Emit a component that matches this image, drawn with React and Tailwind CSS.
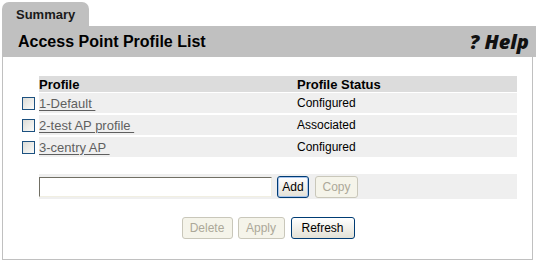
import React from "react";

const rows = [
  { name: "1-Default ", status: "Configured" },
  { name: "2-test AP profile ", status: "Associated" },
  { name: "3-centry AP ", status: "Configured" },
];

function Btn({ children, disabled, focused, className = "" }) {
  if (disabled) {
    return (
      <button
        disabled
        className={`h-[22px] rounded-[3px] border border-[#c9c7ba] bg-[#f5f4ea] text-[12px] text-[#aca899] leading-none ${className}`}
      >
        {children}
      </button>
    );
  }
  return (
    <button
      className={`h-[22px] rounded-[3px] border border-[#003c74] bg-gradient-to-b from-[#ffffff] to-[#e3e1d6] text-[12px] text-black leading-none ${
        focused ? "shadow-[inset_0_0_0_1px_#a8c4ec]" : ""
      } ${className}`}
    >
      {children}
    </button>
  );
}

export default function App() {
  return (
    <div className="w-[536px] h-[263px] bg-white font-['Liberation_Sans',Arial,sans-serif] text-black overflow-hidden">
      <div className="pt-[2px] pl-[2px]">
        <div className="w-[87px] h-[24px] bg-[#c0c0c0] rounded-t-[7px] pl-[14px] pt-[6px] text-[13px] font-bold leading-none text-[#1a1a1a]">
          Summary
        </div>
        <div className="h-[31px] bg-[#c0c0c0] flex items-center justify-between pl-[16px] pr-[7px]">
          <span className="text-[16px] font-bold">Access Point Profile List</span>
          <span className="font-['Open_Sans',sans-serif] text-[20px] font-extrabold italic text-[#111] leading-none">? Help</span>
        </div>
        <div className="w-[531px] h-[203px] border-l border-r border-b border-[#c0c0c0] pt-[19px]">
          <div className="flex">
            <div className="w-[36px]" />
            <div className="w-[478px] h-[16px] bg-[#dcdcdc] flex items-center text-[13px] font-bold leading-none">
              <div className="w-[258px]">Profile</div>
              <div>Profile Status</div>
            </div>
          </div>
          <div className="flex flex-col gap-[2px] mt-[1px]">
            {rows.map((r) => (
              <div key={r.name} className="flex items-center">
                <div className="w-[36px] flex justify-end pr-[4px]">
                  <div className="w-[13px] h-[13px] border border-[#1c5180] bg-gradient-to-br from-[#dcdcd7] to-[#fbfbf9]" />
                </div>
                <div className="w-[478px] h-[20px] bg-[#efefef] flex items-center leading-none">
                  <div className="w-[258px] text-[13px] text-[#5f5f5f] underline underline-offset-2 whitespace-pre">
                    {r.name}
                  </div>
                  <div className="text-[12px]">{r.status}</div>
                </div>
              </div>
            ))}
          </div>
          <div className="flex mt-[17px]">
            <div className="w-[36px]" />
            <div className="w-[478px] h-[25px] bg-[#efefef] flex items-center gap-[5px]">
              <div className="w-[233px] h-[20px] bg-white border border-t-[#716f64] border-l-[#716f64] border-b-[#f1efe2] border-r-[#f1efe2]" />
              <Btn focused className="w-[32px]">Add</Btn>
              <Btn disabled className="w-[43px] ml-[1px]">Copy</Btn>
            </div>
          </div>
          <div className="flex justify-center gap-[5px] mt-[18px] pl-[1px]">
            <Btn disabled className="w-[51px]">Delete</Btn>
            <Btn disabled className="w-[47px]">Apply</Btn>
            <Btn className="w-[64px] ml-[1px]">Refresh</Btn>
          </div>
        </div>
      </div>
    </div>
  );
}
